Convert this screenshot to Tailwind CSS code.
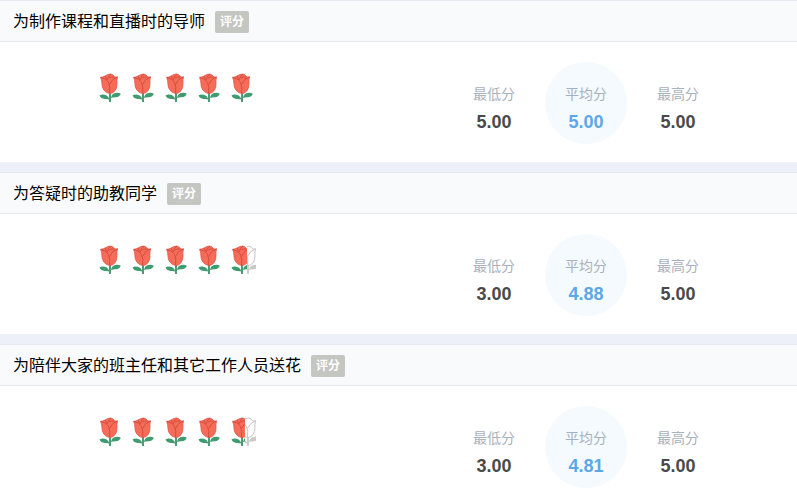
<!DOCTYPE html>
<html lang="zh-CN">
<head>
<meta charset="utf-8">
<meta name="viewport" content="width=device-width, initial-scale=1">
<title>评分</title>
<script src="https://cdn.jsdelivr.net/npm/@tailwindcss/browser@4"></script>
</head>
<body class="bg-white font-['Liberation_Sans','Noto_Sans_CJK_SC',sans-serif] text-black">
<svg class="hidden" aria-hidden="true">
  <symbol id="rose" viewBox="0 0 22 30">
    <path d="M11 20V29" stroke="#3b8f66" stroke-width="1.800" fill="none"/>
    <path d="M12 25Q12.500 21 16 20Q19.500 19 21.800 20.800Q20.500 24 17 24.300Q14 24.200 12 25ZM10.500 26.500Q9 22.500 5.500 21.800Q2.500 21.200 .5 22.600Q2 25.800 5.500 26Q8.500 25.800 10.500 26.500Z" fill="#3f9c70"/>
    <path d="M1.500 4.300Q4 4.300 6 3Q9 1 12 1Q14.500 1.800 15.500 3.800Q17 4.300 18.500 3.800Q17.600 7.500 18 10.500Q18.200 15 15.800 18Q13.800 20.500 10.500 20.500Q7 20 4.800 17Q2.800 14 2.900 10.500Q3 7 1.500 4.300Z" fill="#f66c58" stroke="#df5445" stroke-width=".8"/>
    <path d="M2 4.500Q7.500 5.500 9.500 9.500Q11.500 14 10.500 20M18.500 4Q13.500 5 10.500 11.500M6 3Q6.500 5 8.500 7M12 1.200Q9 2.500 8.500 6.500M15.500 4Q12.500 3.500 10 5" fill="none" stroke="#cf493d" stroke-width=".9"/>
  </symbol>
  <symbol id="rose-empty" viewBox="0 0 22 30">
    <path d="M11 20V29" stroke="#c9c9c9" stroke-width="1.800" fill="none"/>
    <path d="M12 25Q12.500 21 16 20Q19.500 19 21.800 20.800Q20.500 24 17 24.300Q14 24.200 12 25ZM10.500 26.500Q9 22.500 5.500 21.800Q2.500 21.200 .5 22.600Q2 25.800 5.500 26Q8.500 25.800 10.500 26.500Z" fill="#c9c9c9"/>
    <path d="M1.500 4.300Q4 4.300 6 3Q9 1 12 1Q14.500 1.800 15.500 3.800Q17 4.300 18.500 3.800Q17.600 7.500 18 10.500Q18.200 15 15.800 18Q13.800 20.500 10.500 20.500Q7 20 4.800 17Q2.800 14 2.900 10.500Q3 7 1.500 4.300Z" fill="#fff" stroke="#c4c4c4" stroke-width="1"/>
    <path d="M2 4.500Q7.500 5.500 9.500 9.500Q11.500 14 10.500 20M18.500 4Q13.500 5 10.500 11.500" fill="none" stroke="#c4c4c4" stroke-width="1"/>
  </symbol>
</svg>
<main class="flex flex-col gap-[10px] bg-[#edf0f8]">
  <section class="bg-white">
    <header class="flex h-[42px] items-center gap-[10px] border-y border-[#e6e9ee] bg-[#f9fafc] px-[13px] pt-[2px]">
      <h2 class="text-[16px] leading-6">为制作课程和直播时的导师</h2>
      <span class="rounded-xs bg-[#c4c6c2] px-[5px] text-[12px] leading-[22px] font-bold text-white">评分</span>
    </header>
    <div class="flex h-[120px] items-start">
      <div class="flex w-[44%] justify-center gap-[11px] pt-[31px] pl-[2px]" role="img" aria-label="5.00">
        <svg class="h-[30px] w-[22px]"><use href="#rose"/></svg>
        <svg class="h-[30px] w-[22px]"><use href="#rose"/></svg>
        <svg class="h-[30px] w-[22px]"><use href="#rose"/></svg>
        <svg class="h-[30px] w-[22px]"><use href="#rose"/></svg>
        <svg class="h-[30px] w-[22px]"><use href="#rose"/></svg>
      </div>
      <dl class="ml-auto flex gap-[10px] pt-5 pr-[78px] text-center">
        <div class="size-[82px] pt-[22px]"><dt class="text-[14px] leading-5 text-[#a9b0bd]">最低分</dt><dd class="pt-2 text-[18px] leading-5 font-bold text-[#4a4a4a]">5.00</dd></div>
        <div class="size-[82px] rounded-full bg-[#f4fafd] pt-[22px]"><dt class="text-[14px] leading-5 text-[#a9b0bd]">平均分</dt><dd class="pt-2 text-[18px] leading-5 font-bold text-[#5ba7ea]">5.00</dd></div>
        <div class="size-[82px] pt-[22px]"><dt class="text-[14px] leading-5 text-[#a9b0bd]">最高分</dt><dd class="pt-2 text-[18px] leading-5 font-bold text-[#4a4a4a]">5.00</dd></div>
      </dl>
    </div>
  </section>
  <section class="bg-white">
    <header class="flex h-[42px] items-center gap-[10px] border-y border-[#e6e9ee] bg-[#f9fafc] px-[13px] pt-[2px]">
      <h2 class="text-[16px] leading-6">为答疑时的助教同学</h2>
      <span class="rounded-xs bg-[#c4c6c2] px-[5px] text-[12px] leading-[22px] font-bold text-white">评分</span>
    </header>
    <div class="flex h-[120px] items-start">
      <div class="flex w-[44%] justify-center gap-[11px] pt-[31px] pl-[2px]" role="img" aria-label="4.88">
        <svg class="h-[30px] w-[22px]"><use href="#rose"/></svg>
        <svg class="h-[30px] w-[22px]"><use href="#rose"/></svg>
        <svg class="h-[30px] w-[22px]"><use href="#rose"/></svg>
        <svg class="h-[30px] w-[22px]"><use href="#rose"/></svg>
        <svg class="h-[30px] w-[22px] overflow-visible"><svg width="16" height="30"><use href="#rose" width="22" height="30"/></svg><svg x="16" width="9" height="30"><use href="#rose-empty" x="-10" width="22" height="30"/></svg></svg>
      </div>
      <dl class="ml-auto flex gap-[10px] pt-5 pr-[78px] text-center">
        <div class="size-[82px] pt-[22px]"><dt class="text-[14px] leading-5 text-[#a9b0bd]">最低分</dt><dd class="pt-2 text-[18px] leading-5 font-bold text-[#4a4a4a]">3.00</dd></div>
        <div class="size-[82px] rounded-full bg-[#f4fafd] pt-[22px]"><dt class="text-[14px] leading-5 text-[#a9b0bd]">平均分</dt><dd class="pt-2 text-[18px] leading-5 font-bold text-[#5ba7ea]">4.88</dd></div>
        <div class="size-[82px] pt-[22px]"><dt class="text-[14px] leading-5 text-[#a9b0bd]">最高分</dt><dd class="pt-2 text-[18px] leading-5 font-bold text-[#4a4a4a]">5.00</dd></div>
      </dl>
    </div>
  </section>
  <section class="bg-white">
    <header class="flex h-[42px] items-center gap-[10px] border-y border-[#e6e9ee] bg-[#f9fafc] px-[13px] pt-[2px]">
      <h2 class="text-[16px] leading-6">为陪伴大家的班主任和其它工作人员送花</h2>
      <span class="rounded-xs bg-[#c4c6c2] px-[5px] text-[12px] leading-[22px] font-bold text-white">评分</span>
    </header>
    <div class="flex items-start pb-[13px]">
      <div class="flex w-[44%] justify-center gap-[11px] pt-[31px] pl-[2px]" role="img" aria-label="4.81">
        <svg class="h-[30px] w-[22px]"><use href="#rose"/></svg>
        <svg class="h-[30px] w-[22px]"><use href="#rose"/></svg>
        <svg class="h-[30px] w-[22px]"><use href="#rose"/></svg>
        <svg class="h-[30px] w-[22px]"><use href="#rose"/></svg>
        <svg class="h-[30px] w-[22px] overflow-visible"><svg width="14" height="30"><use href="#rose" width="22" height="30"/></svg><svg x="14" width="11" height="30"><use href="#rose-empty" x="-8" width="22" height="30"/></svg></svg>
      </div>
      <dl class="ml-auto flex gap-[10px] pt-5 pr-[78px] text-center">
        <div class="size-[82px] pt-[22px]"><dt class="text-[14px] leading-5 text-[#a9b0bd]">最低分</dt><dd class="pt-2 text-[18px] leading-5 font-bold text-[#4a4a4a]">3.00</dd></div>
        <div class="size-[82px] rounded-full bg-[#f4fafd] pt-[22px]"><dt class="text-[14px] leading-5 text-[#a9b0bd]">平均分</dt><dd class="pt-2 text-[18px] leading-5 font-bold text-[#5ba7ea]">4.81</dd></div>
        <div class="size-[82px] pt-[22px]"><dt class="text-[14px] leading-5 text-[#a9b0bd]">最高分</dt><dd class="pt-2 text-[18px] leading-5 font-bold text-[#4a4a4a]">5.00</dd></div>
      </dl>
    </div>
  </section>
</main>
</body>
</html>
